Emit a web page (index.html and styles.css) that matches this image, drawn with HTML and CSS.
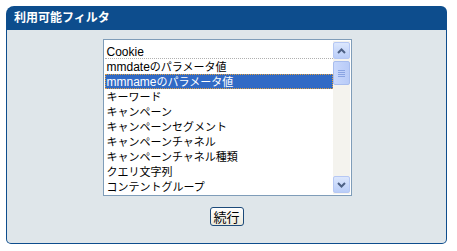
FILE: index.html
```html
<!DOCTYPE html>
<html lang="ja">
<head>
  <meta charset="UTF-8" />
  <title>利用可能フィルタ</title>
  <link rel="stylesheet" href="styles.css">
</head>
<body>
  <div class="panel">
    <div class="panel-header">利用可能フィルタ</div>
    <div class="panel-body">
      <div class="listbox">
        <ul class="options">
          <li class="focus"><span class="en">Cookie</span></li>
          <li><span class="en">mmdate</span>のパラメータ値</li>
          <li class="selected"><span class="en">mmname</span>のパラメータ値</li>
          <li>キーワード</li>
          <li>キャンペーン</li>
          <li>キャンペーンセグメント</li>
          <li>キャンペーンチャネル</li>
          <li>キャンペーンチャネル種類</li>
          <li>クエリ文字列</li>
          <li>コンテントグループ</li>
        </ul>
        <div class="scrollbar">
          <div class="sb-btn">
            <svg width="9" height="6" viewBox="0 0 9 6"><path d="M1 5 L4.5 1.5 L8 5" fill="none" stroke="#4d6185" stroke-width="2"/></svg>
          </div>
          <div class="sb-track">
            <div class="sb-thumb">
              <span></span><span></span><span></span><span></span>
            </div>
          </div>
          <div class="sb-btn">
            <svg width="9" height="6" viewBox="0 0 9 6"><path d="M1 1 L4.5 4.5 L8 1" fill="none" stroke="#4d6185" stroke-width="2"/></svg>
          </div>
        </div>
      </div>
      <button class="go-btn">続行</button>
    </div>
  </div>
</body>
</html>
```
FILE: styles.css
```css
body {
  margin: 0;
  padding: 6px 0 0 6px;
  background-color: #fff;
  font-family: 'Liberation Sans', 'Noto Sans CJK JP', sans-serif;
  font-size: 12px;
  color: #000;
}

.panel {
  width: 441px;
  border-radius: 8px 6px 5px 5px;
  overflow: hidden;
  background-color: #0d4d8d;
}

.panel-header {
  height: 24px;
  line-height: 22px;
  padding-left: 8px;
  color: #fff;
  font-weight: bold;
  font-size: 12px;
  font-family: 'Noto Sans CJK JP', sans-serif;
}

.panel-body {
  margin: 0 1px 1px 1px;
  border-radius: 0 0 4px 4px;
  background-color: #dfe6ea;
  display: flex;
  flex-direction: column;
  align-items: center;
  padding: 9px 0 17px 0;
}

.listbox {
  width: 247px;
  height: 155px;
  border: 1px solid #7f9db9;
  background-color: #fff;
  display: flex;
  margin-left: 1px;
}

.options {
  list-style: none;
  margin: 0;
  padding: 4px 0 0 1px;
  flex: 1;
  font-family: 'Noto Sans CJK JP', sans-serif;
  font-size: 11px;
}

.options li {
  height: 15px;
  line-height: 15px;
  padding-left: 2px;
  white-space: nowrap;
  box-sizing: border-box;
}

.options .en {
  font-family: 'Liberation Sans', sans-serif;
  font-size: 12px;
}

.options li.focus {
  border-bottom: 1px dotted #b0b0b0;
}

.options li.selected {
  background-color: #316ac5;
  color: #fff;
  outline: 1px dotted #e0a040;
  outline-offset: -1px;
}

.scrollbar {
  width: 17px;
  margin: 1px 1px 1px 0;
  background-color: #f4f3ee;
  display: flex;
  flex-direction: column;
}

.sb-btn {
  height: 15px;
  margin: 1px 0;
  border: 1px solid #b6c8f4;
  border-radius: 2px;
  background: linear-gradient(to bottom, #dce7fd, #b9cdf8);
  display: flex;
  align-items: center;
  justify-content: center;
}

.sb-track {
  flex: 1;
}

.sb-thumb {
  height: 22px;
  margin-top: 1px;
  border: 1px solid #a8bdee;
  border-radius: 2px;
  background: linear-gradient(to right, #c9d8fc, #b8cbf7);
  display: flex;
  flex-direction: column;
  align-items: center;
  justify-content: center;
  gap: 1px;
}

.sb-thumb span {
  width: 7px;
  height: 1px;
  background-color: #8aa4e2;
}

.go-btn {
  margin-top: 11px;
  width: 34px;
  height: 19px;
  padding: 0;
  border: 1px solid #1c4a7a;
  border-radius: 3px;
  background: linear-gradient(to bottom, #ffffff, #ece9dc);
  font-family: 'Noto Sans CJK JP', sans-serif;
  font-size: 13px;
  line-height: 15px;
  color: #000;
}
```
